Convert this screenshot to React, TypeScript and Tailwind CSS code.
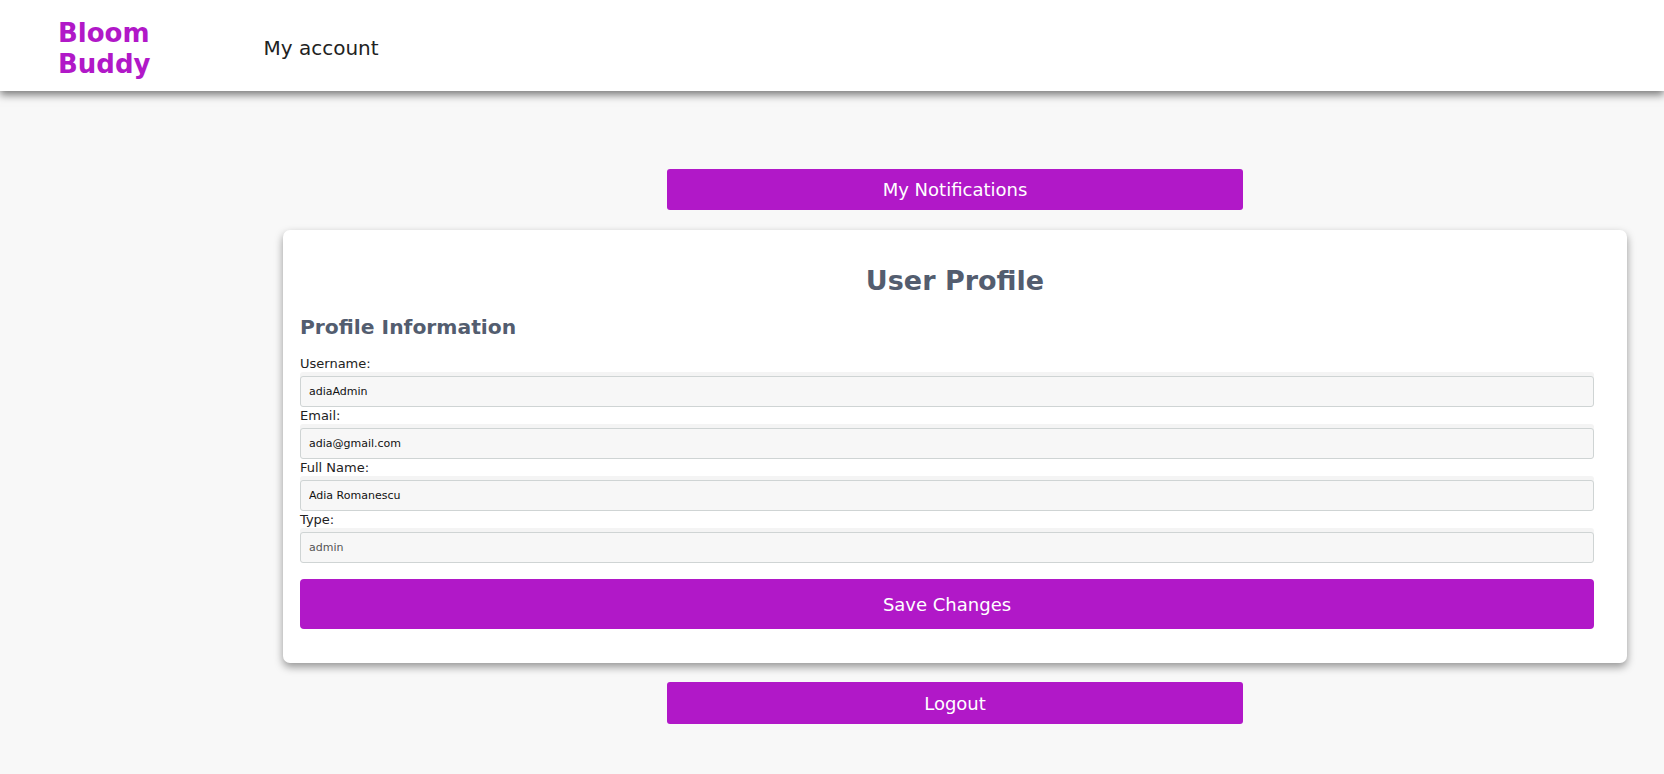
import React from 'react'

// Profile fields shown in the card
const FIELDS: { label: string; value: string; muted?: boolean }[] = [
  { label: 'Username:',  value: 'adiaAdmin' },
  { label: 'Email:',     value: 'adia@gmail.com' },
  { label: 'Full Name:', value: 'Adia Romanescu' },
  { label: 'Type:',      value: 'admin', muted: true },
]

function Header() {
  return (
    <header className="relative z-10 h-[91px] bg-white flex items-start shadow-[0_4px_8px_rgba(0,0,0,0.5)]">
      <div className="ml-[58px] mt-[18px] text-[26px] leading-[31px] font-bold text-[#b118c8]">
        Bloom
        <br />
        Buddy
      </div>
      <a className="ml-[113px] mt-[37px] text-[20px] leading-[23px] text-[#222]">My account</a>
    </header>
  )
}

function PurpleButton({ label, h }: { label: string; h: string }) {
  return (
    <button className={`w-[576px] ${h} rounded-[3px] bg-[#b118c8] text-white text-[18px]`}>
      {label}
    </button>
  )
}

export default function App() {
  return (
    <div className="min-h-screen bg-[#f8f8f8] font-['DejaVu_Sans',Verdana,sans-serif]">
      <Header />

      <main className="ml-[246px] flex flex-col items-center pt-[78px] pb-[50px]">
        <PurpleButton label="My Notifications" h="h-[41px]" />

        {/* ── Profile card ─────────────────────────── */}
        <section className="mt-[20px] w-[1344px] bg-white rounded-[7px] px-[17px] pt-[36px] pb-[34px] shadow-[0_4px_9px_rgba(0,0,0,0.4)]">
          <h1 className="text-center text-[27px] leading-[30px] font-bold text-[#535d6f]">User Profile</h1>
          <h2 className="mt-[20px] text-[20.3px] leading-[23px] font-bold text-[#535d6f]">Profile Information</h2>

          <form className="mt-[17px] w-[1294px]">
            {FIELDS.map(({ label, value, muted }) => (
              <div key={label} className="h-[52px]">
                <label className="block text-[13px] leading-[15px] text-[#222]">{label}</label>
                <input
                  readOnly
                  value={value}
                  className={`mt-[5px] block w-full h-[31px] px-[8px] rounded-[3px] border border-[#cfd4d4] bg-[#f7f7f7] text-[11px] outline-none shadow-[0_-4px_0_#f4f4f4] ${muted ? 'text-[#555]' : 'text-[#111]'}`}
                />
              </div>
            ))}

            <button type="button" className="mt-[15px] w-full h-[50px] rounded-[4px] bg-[#b118c8] text-white text-[18px]">
              Save Changes
            </button>
          </form>
        </section>

        <div className="mt-[19px]">
          <PurpleButton label="Logout" h="h-[42px]" />
        </div>
      </main>
    </div>
  )
}
